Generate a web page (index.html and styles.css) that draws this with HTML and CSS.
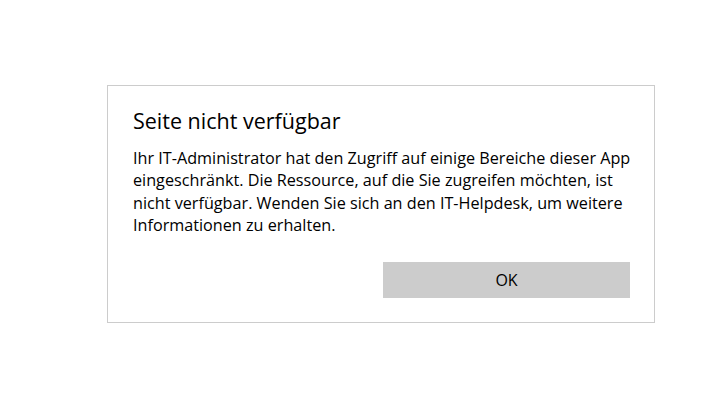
FILE: index.html
```html
<!DOCTYPE html>
<html lang="de">
<head>
    <meta charset="UTF-8">
    <title>Seite nicht verfügbar</title>
    <link rel="stylesheet" href="styles.css">
</head>
<body>
    <div class="dialog">
        <h1 class="dialog-title">Seite nicht verfügbar</h1>
        <p class="dialog-text">Ihr IT-Administrator hat den Zugriff auf einige Bereiche dieser App<br>eingeschränkt. Die Ressource, auf die Sie zugreifen möchten, ist<br>nicht verfügbar. Wenden Sie sich an den IT-Helpdesk, um weitere<br>Informationen zu erhalten.</p>
        <div class="dialog-actions">
            <button class="btn-ok" type="button">OK</button>
        </div>
    </div>
</body>
</html>
```

FILE: styles.css
```css
body {
    font-family: "Open Sans", "Noto Sans", sans-serif;
    background-color: #fff;
    color: #000;
    margin: 0;
    padding: 85px 0 0 107px;
}

.dialog {
    box-sizing: border-box;
    width: 548px;
    height: 238px;
    border: 1px solid #cccccc;
    padding: 19px 24px 0 25px;
}

.dialog-title {
    font-size: 21.5px;
    font-weight: normal;
    line-height: 32px;
    margin: 0 0 10px 0;
}

.dialog-text {
    font-size: 16.2px;
    line-height: 22.3px;
    margin: 0 -20px 0 0;
    white-space: nowrap;
}

.dialog-actions {
    display: flex;
    justify-content: flex-end;
    margin-top: 26px;
}

.btn-ok {
    width: 247px;
    height: 36px;
    border: none;
    background-color: #cccccc;
    color: #000;
    font-family: inherit;
    font-size: 16px;
    padding: 0;
}
```
